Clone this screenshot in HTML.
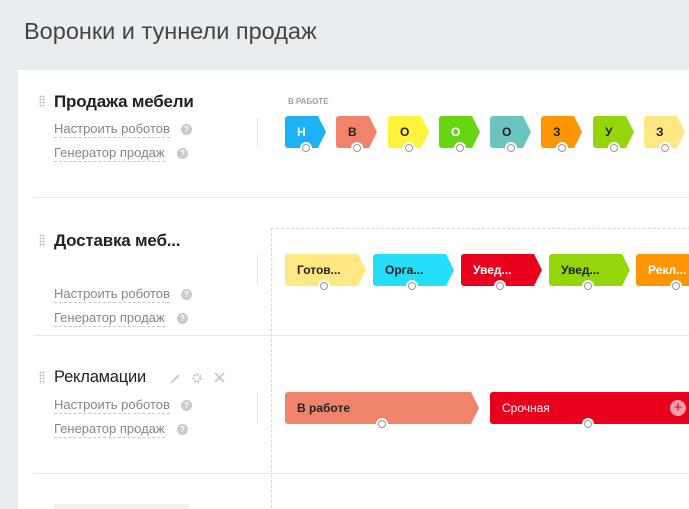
<!DOCTYPE html>
<html><head><meta charset="utf-8"><style>
*{margin:0;padding:0;box-sizing:border-box}
html,body{width:689px;height:509px;overflow:hidden}
body{background:#e9edf0;font-family:"Liberation Sans","DejaVu Sans",sans-serif;position:relative}
.a{position:absolute}
h1{position:absolute;left:24px;top:18px;font-size:23.5px;font-weight:normal;color:#444;white-space:nowrap}
.panel{position:absolute;left:18px;top:70px;width:671px;height:439px;background:#fff}
.t{position:absolute;left:54px;font-size:17px;color:#222;font-weight:bold;white-space:nowrap;letter-spacing:-0.2px}
.drag{position:absolute;left:39px;width:6px;height:13px;background-image:radial-gradient(circle,#bbb 0.9px,transparent 1.1px);background-size:3px 3px}
.l{position:absolute;left:54px;font-size:13px;color:#80868e;white-space:nowrap;border-bottom:1px dashed #c5c9cd;line-height:16px}
.q{position:absolute;width:11px;height:11px;border-radius:50%;background:#c7cbcf;color:#fff;font-size:8px;line-height:11px;text-align:center;font-weight:bold}
.sep{position:absolute;left:33px;width:656px;height:1px;background:#e6e8ea}
.vl{position:absolute;left:257px;width:1px;height:31px;background:#e4e6e8}
.s{position:absolute;height:32px;border-radius:3px;clip-path:polygon(0 0,calc(100% - 8px) 0,100% 50%,calc(100% - 8px) 100%,0 100%);font-size:12px;font-weight:bold;line-height:32px;padding-left:12px;white-space:nowrap;color:#222}
.c{position:absolute;width:12px;height:12px;border-radius:50%;background:#fff}
.c::after{content:"";position:absolute;left:2px;top:2px;width:8px;height:8px;border-radius:50%;border:1px solid #999;box-sizing:border-box}
</style></head><body>
<h1>Воронки и туннели продаж</h1>
<div class="panel"></div>

<div class="drag" style="top:95px"></div>
<div class="t" style="top:92px">Продажа мебели</div>
<div class="l" style="top:121px">Настроить роботов</div><div class="q" style="left:181px;top:124px">?</div>
<div class="l" style="top:145px">Генератор продаж</div><div class="q" style="left:177px;top:148px">?</div>
<div class="vl" style="top:117px"></div>
<div class="a" style="left:288px;top:97px;font-size:8px;font-weight:bold;color:#9aa0a6">В РАБОТЕ</div>
<div class="s" style="left:285px;top:116px;width:41px;background:#1eb1f5;color:#fff">Н</div><div class="c" style="left:300px;top:142px"></div>
<div class="s" style="left:336px;top:116px;width:41px;background:#f2836b">В</div><div class="c" style="left:351px;top:142px"></div>
<div class="s" style="left:388px;top:116px;width:41px;background:#fff33b">О</div><div class="c" style="left:403px;top:142px"></div>
<div class="s" style="left:439px;top:116px;width:41px;background:#67d511;color:#fff">О</div><div class="c" style="left:454px;top:142px"></div>
<div class="s" style="left:490px;top:116px;width:41px;background:#6bc4bf">О</div><div class="c" style="left:505px;top:142px"></div>
<div class="s" style="left:541px;top:116px;width:41px;background:#ff9500">З</div><div class="c" style="left:556px;top:142px"></div>
<div class="s" style="left:593px;top:116px;width:41px;background:#95d60a">У</div><div class="c" style="left:608px;top:142px"></div>
<div class="s" style="left:644px;top:116px;width:41px;background:#ffe883">З</div><div class="c" style="left:659px;top:142px"></div>
<div class="sep" style="top:197px"></div>

<div class="a" style="left:271px;top:228px;width:430px;height:290px;border:1px dashed #d3d6d9"></div>

<div class="drag" style="top:234px"></div>
<div class="t" style="top:231px">Доставка меб...</div>
<div class="l" style="top:286px">Настроить роботов</div><div class="q" style="left:181px;top:289px">?</div>
<div class="l" style="top:310px">Генератор продаж</div><div class="q" style="left:177px;top:313px">?</div>
<div class="vl" style="top:255px"></div>
<div class="s" style="left:285px;top:254px;width:81px;background:#ffe883">Готов...</div><div class="c" style="left:318px;top:280px"></div>
<div class="s" style="left:373px;top:254px;width:81px;background:#24ddf8">Орга...</div><div class="c" style="left:406px;top:280px"></div>
<div class="s" style="left:461px;top:254px;width:81px;background:#e8001c;color:#fff">Увед...</div><div class="c" style="left:494px;top:280px"></div>
<div class="s" style="left:549px;top:254px;width:81px;background:#95d60a">Увед...</div><div class="c" style="left:582px;top:280px"></div>
<div class="s" style="left:636px;top:254px;width:81px;background:#ff9500;color:#fff">Рекл...</div><div class="c" style="left:670px;top:280px"></div>
<div class="sep" style="top:335px"></div>

<div class="drag" style="top:371px"></div>
<div class="t" style="top:368px;font-weight:normal;font-size:16.5px">Рекламации</div>
<svg class="a" style="left:168px;top:371px" width="60" height="14"><path d="M3 12 L11 4" stroke="#c5c9cd" stroke-width="2"/><circle cx="29" cy="7" r="3.5" fill="none" stroke="#c5c9cd" stroke-width="2.5" stroke-dasharray="2 1.2"/><path d="M47 2 L56 11 M56 2 L47 11" stroke="#c5c9cd" stroke-width="1.8"/></svg>
<div class="l" style="top:397px">Настроить роботов</div><div class="q" style="left:181px;top:400px">?</div>
<div class="l" style="top:421px">Генератор продаж</div><div class="q" style="left:177px;top:424px">?</div>
<div class="vl" style="top:392px"></div>
<div class="s" style="left:285px;top:392px;width:194px;background:#f2836b">В работе</div><div class="c" style="left:376px;top:418px"></div>
<div class="s" style="left:490px;top:392px;width:210px;background:#e8001c;color:#fff;font-weight:normal">Срочная</div><div class="c" style="left:582px;top:418px"></div>
<div class="a" style="left:670px;top:400px;width:16px;height:16px;border-radius:50%;background:#f5a0a8;color:#e8001c;font-size:15px;line-height:15px;text-align:center">+</div>
<div class="sep" style="top:473px"></div>
<div class="a" style="left:54px;top:504px;width:135px;height:5px;background:#eef0f2"></div>
</body></html>
